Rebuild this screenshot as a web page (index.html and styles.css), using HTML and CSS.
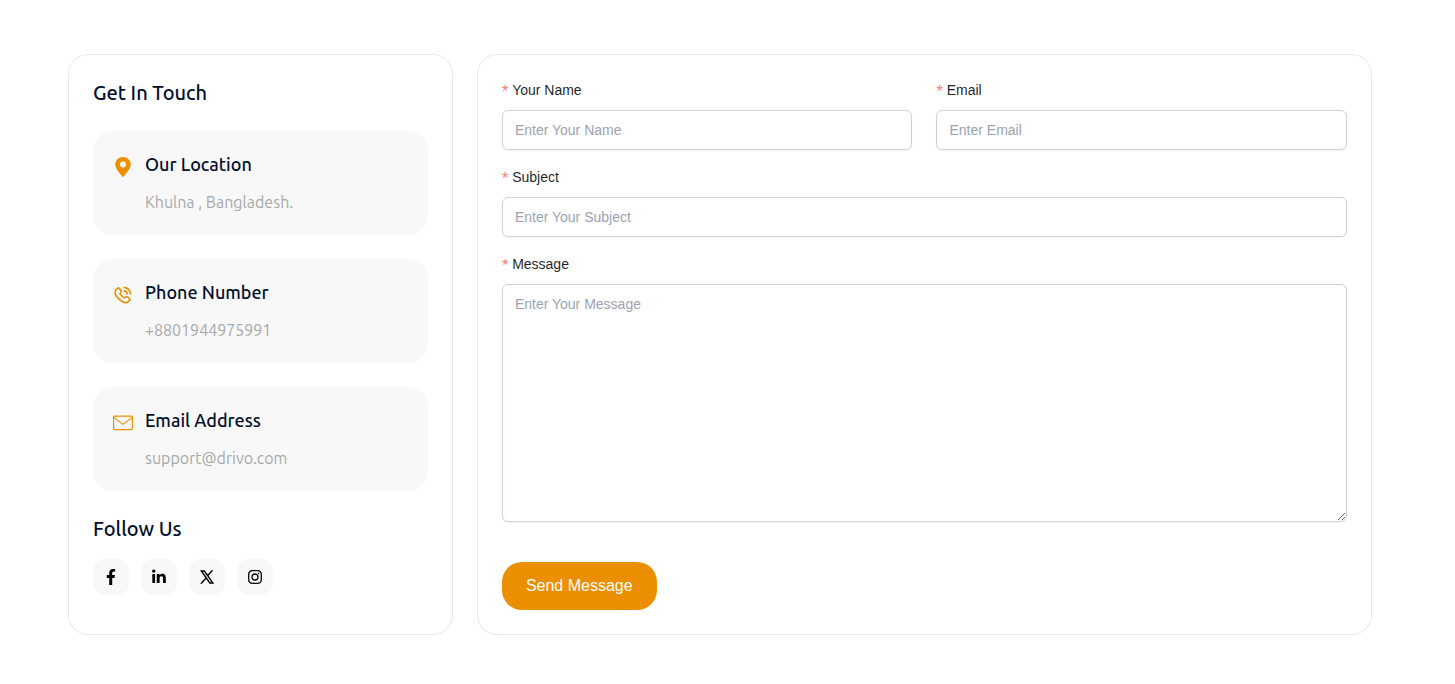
FILE: index.html
```html
<!DOCTYPE html>
<html lang="en">
<head>
    <meta charset="utf-8">
    <meta name="viewport" content="width=device-width, initial-scale=1">
    <title>Contact Us</title>
    <link rel="stylesheet" href="styles.css">
</head>
<body>
    <main class="contact">
        <section class="card">
            <h2>Get In Touch</h2>
            <div class="info-list">
                <div class="info">
                    <svg class="info-icon" viewBox="0 0 20 20" fill="currentColor"><path fill-rule="evenodd" d="M10 0C5.7 0 2.3 3.3 2.3 7.5C2.3 12 7.5 17 10 20.3C12.5 17 17.7 12 17.7 7.5C17.7 3.3 14.3 0 10 0ZM10 4.6A3 3 0 1 1 10 10.6A3 3 0 0 1 10 4.6Z"/></svg>
                    <div>
                        <h3>Our Location</h3>
                        <p>Khulna , Bangladesh.</p>
                    </div>
                </div>
                <div class="info">
                    <svg class="info-icon" viewBox="0 0 20 20" fill="none" stroke="currentColor" stroke-width="1.6" stroke-linejoin="round"><path d="M4.7 3.2L3.1 4.7C.9 7 2.8 10.9 5.9 13.9C8.9 16.9 12.8 18.7 15.3 16.6L16.8 15C17.2 14.6 17.1 14.1 16.7 13.8L14.2 11.7C13.8 11.4 13.3 11.4 12.9 11.8L11.7 13C10.6 12.9 7.1 9.4 6.9 8.2L8.1 7C8.5 6.6 8.5 6.1 8.2 5.7L6.1 3.3C5.7 2.8 5.1 2.8 4.7 3.2Z"/><path d="M10.6 2.4C14.5 2.4 17.6 5.5 17.6 9.4M10.6 5.9C12.6 5.9 14.1 7.4 14.1 9.4"/></svg>
                    <div>
                        <h3>Phone Number</h3>
                        <p>+8801944975991</p>
                    </div>
                </div>
                <div class="info">
                    <svg class="info-icon" viewBox="0 0 20 20" fill="none" stroke="currentColor" stroke-width="1.2" stroke-linejoin="round"><rect x=".6" y="3.2" width="18.8" height="13.4" rx="1.2"/><path d="M1 4.4L10 11.4L19 4.4"/></svg>
                    <div>
                        <h3>Email Address</h3>
                        <p>support@drivo.com</p>
                    </div>
                </div>
            </div>
            <h2>Follow Us</h2>
            <div class="social">
                <a href="#" aria-label="Facebook">
                    <svg viewBox="0 0 16 16" fill="currentColor"><path d="M6.2 16V9H3.8V6.1H6.2V4C6.2 1.4 7.7 0 10 0C11.1 0 12.2.2 12.2.2V2.6H10.9C9.6 2.6 9.2 3.4 9.2 4.2V6.1H12L11.5 9H9.2V16Z"/></svg>
                </a>
                <a href="#" aria-label="LinkedIn">
                    <svg viewBox="0 0 16 16" fill="currentColor"><circle cx="2.7" cy="2.1" r="1.7"/><path d="M1.3 5.1H4.1V14H1.3ZM5.8 5.1H8.5V6.3C9 5.4 10.1 4.8 11.3 4.8C14.1 4.8 14.8 6.7 14.8 9.1V14H12V9.7C12 8.6 12 7.2 10.4 7.2C8.8 7.2 8.6 8.4 8.6 9.6V14H5.8Z"/></svg>
                </a>
                <a href="#" aria-label="X">
                    <svg viewBox="0 0 16 16" fill="currentColor"><path fill-rule="evenodd" d="M1 1.3H5.7L8.8 5.6L12.4 1.3H14.3L9.6 6.8L15.2 14.7H10.5L7.1 10L3 14.7H1.1L6.3 8.8ZM3.8 2.7L11.2 13.3H12.5L5 2.7Z"/></svg>
                </a>
                <a href="#" aria-label="Instagram">
                    <svg viewBox="0 0 16 16" fill="none" stroke="currentColor" stroke-width="1.3"><rect x="1.7" y="1.7" width="12.6" height="12.6" rx="3.6"/><circle cx="8" cy="8" r="3"/><circle cx="11.7" cy="4.3" r=".8" fill="currentColor" stroke="none"/></svg>
                </a>
            </div>
        </section>

        <form class="card form">
            <div class="row">
                <div class="field">
                    <label for="name">Your Name</label>
                    <input type="text" id="name" placeholder="Enter Your Name">
                </div>
                <div class="field">
                    <label for="email">Email</label>
                    <input type="email" id="email" placeholder="Enter Email">
                </div>
            </div>
            <div class="field">
                <label for="subject">Subject</label>
                <input type="text" id="subject" placeholder="Enter Your Subject">
            </div>
            <div class="field">
                <label for="message">Message</label>
                <textarea id="message" placeholder="Enter Your Message"></textarea>
            </div>
            <button type="submit">Send Message</button>
        </form>
    </main>
</body>
</html>
```
FILE: styles.css
```css
* {
    box-sizing: border-box;
}
body {
    margin: 0;
    background: #fff;
    color: #010f2c;
    font-family: Ubuntu, "Noto Sans", sans-serif;
}
h2,
h3,
p {
    margin: 0;
}
h2,
h3 {
    font-family: "Ubuntu Medium", Ubuntu, "Noto Sans", sans-serif;
    font-weight: 500;
}
.contact {
    display: grid;
    grid-template-columns: 43fr 100fr;
    gap: 24px;
    padding: 54px 83px 49px 68px;
}
.card {
    min-width: 0;
    padding: 24px;
    border: 1px solid #e8e8e9;
    border-radius: 20px;
}
h2 {
    font-size: 20px;
    line-height: 28px;
}
.info-list {
    display: grid;
    gap: 24px;
    margin: 24px 0;
}
.info {
    display: flex;
    gap: 12px;
    padding: 20px;
    background: #f8f8f8;
    border-radius: 20px;
}
.info-icon {
    flex: none;
    width: 20px;
    height: 20px;
    margin-top: 6px;
    color: #eb8f00;
    overflow: visible;
}
h3 {
    font-size: 18px;
    line-height: 26px;
}
.info p {
    margin-top: 12px;
    font-size: 16px;
    line-height: 26px;
    font-weight: 400;
    color: #a7a9ac;
}
.social {
    display: flex;
    gap: 12px;
    margin-top: 16px;
}
.social a {
    display: flex;
    align-items: center;
    justify-content: center;
    width: 36px;
    height: 36px;
    background: #f8f8f8;
    border-radius: 12px;
    color: #000;
}
.social svg {
    width: 16px;
    height: 16px;
}
.form {
    font-family: "Liberation Sans", Arial, sans-serif;
}
.row {
    display: grid;
    grid-template-columns: 1fr 1fr;
    gap: 24px;
}
.field {
    margin-bottom: 16px;
}
label {
    display: flex;
    align-items: center;
    gap: 4px;
    height: 22px;
    margin-bottom: 9px;
    font-size: 14px;
    line-height: 22px;
    color: rgba(0, 0, 0, 0.88);
}
label::before {
    content: "*";
    padding-top: 3px;
    font-size: 16px;
    color: #ff7875;
}
input,
textarea {
    display: block;
    width: 100%;
    border: 1px solid #d1d1db;
    border-radius: 6px;
    background: #fff;
    box-shadow: 0 1px 2px rgba(0, 0, 0, 0.05);
    font-family: inherit;
    font-size: 14px;
    line-height: 22px;
    color: rgba(0, 0, 0, 0.88);
}
input {
    height: 40px;
    padding: 8px 12px;
}
textarea {
    height: 238px;
    padding: 8px 12px;
    resize: vertical;
}
::placeholder {
    color: #9ca3af;
    opacity: 1;
}
button {
    margin-top: 24px;
    padding: 12px 24px;
    border: 0;
    border-radius: 20px;
    background: #eb8f00;
    color: #fff;
    font-family: inherit;
    font-size: 16px;
    line-height: 24px;
    cursor: pointer;
}
@media (max-width: 900px) {
    .contact {
        grid-template-columns: 1fr;
        padding: 24px;
    }
}
```
